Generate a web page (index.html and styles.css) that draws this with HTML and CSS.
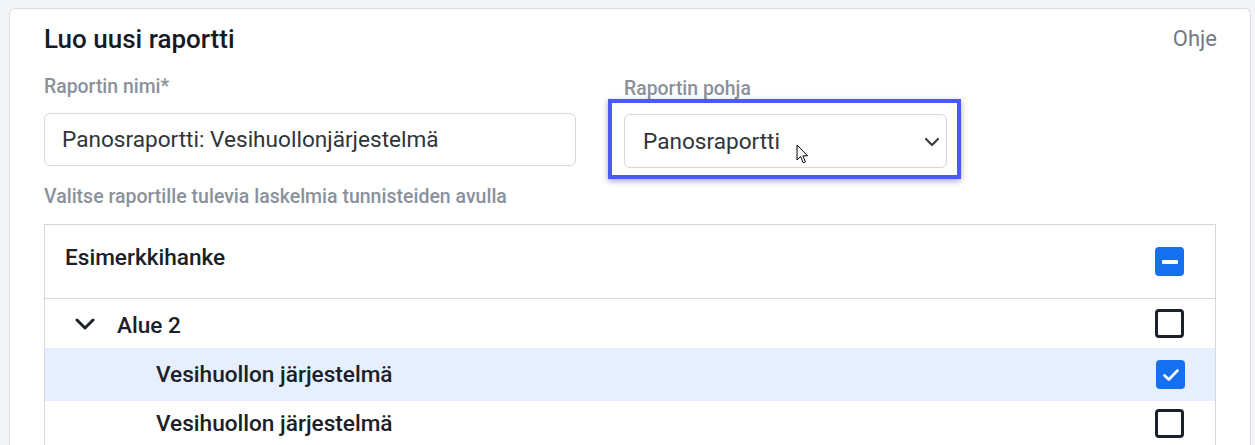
FILE: index.html
```html
<!DOCTYPE html>
<html lang="fi">
<head>
<meta charset="utf-8">
<title>Luo uusi raportti</title>
<link rel="stylesheet" href="styles.css">
</head>
<body>
<div class="card">
  <div class="card-head">
    <h1 class="title">Luo uusi raportti</h1>
    <a class="help">Ohje</a>
  </div>
  <div class="fields">
    <div class="field field-name">
      <div class="label">Raportin nimi*</div>
      <div class="input">Panosraportti: Vesihuollonjärjestelmä</div>
    </div>
    <div class="field field-template">
      <div class="label">Raportin pohja</div>
      <div class="select-wrap">
        <div class="select">
          <span>Panosraportti</span>
          <svg class="select-chevron" width="16" height="10" viewBox="0 0 16 10"><path d="M2 2 L8 8 L14 2" fill="none" stroke="#3a3d42" stroke-width="2.2" stroke-linecap="round" stroke-linejoin="round"/></svg>
        </div>
        <div class="highlight"></div>
        <svg class="pointer" width="14" height="21" viewBox="0 0 14 21"><path d="M1 1 L1 16 L4.6 12.6 L7.2 18.8 L9.4 17.9 L6.9 11.8 L11.6 11.8 Z" fill="#fff" stroke="#000" stroke-width="1" stroke-linejoin="round"/></svg>
      </div>
    </div>
  </div>
  <div class="hint">Valitse raportille tulevia laskelmia tunnisteiden avulla</div>
  <div class="tree">
    <div class="tree-head">
      <span class="tree-text">Esimerkkihanke</span>
      <span class="cb cb-partial"><span class="bar"></span></span>
    </div>
    <div class="row row-group">
      <span class="row-left">
        <svg class="caret" width="20" height="12" viewBox="0 0 20 12"><path d="M2 2 L10 10 L18 2" fill="none" stroke="#1c2029" stroke-width="3" stroke-linecap="round" stroke-linejoin="round"/></svg>
        <span class="tree-text">Alue 2</span>
      </span>
      <span class="cb"></span>
    </div>
    <div class="row row-child row-selected">
      <span class="tree-text">Vesihuollon järjestelmä</span>
      <span class="cb cb-checked"><svg width="18" height="14" viewBox="0 0 18 14"><path d="M2.5 7.5 L6.8 11.5 L15.5 2.5" fill="none" stroke="#fff" stroke-width="2.6" stroke-linecap="round" stroke-linejoin="round"/></svg></span>
    </div>
    <div class="row row-child">
      <span class="tree-text">Vesihuollon järjestelmä</span>
      <span class="cb"></span>
    </div>
  </div>
</div>
</body>
</html>
```

FILE: styles.css
```css
* { box-sizing: border-box; }

html, body {
  margin: 0;
  padding: 0;
  background: #f3f4f6;
  font-family: Roboto, "Liberation Sans", Arial, sans-serif;
  overflow: hidden;
}

.card {
  margin: 8px 4px 0 9px;
  background: #fff;
  border: 1px solid #d9dce1;
  border-bottom: none;
  border-radius: 6px 6px 0 0;
  padding: 14px 34px 0 34px;
  height: 460px;
}

.card-head {
  display: flex;
  justify-content: space-between;
  align-items: center;
  height: 32px;
}

.title {
  margin: 0;
  font-size: 26px;
  line-height: 32px;
  font-weight: 500;
  color: #161a22;
}

.help {
  font-size: 22px;
  color: #737a85;
  line-height: 32px;
  margin-right: -1px;
}

.fields {
  display: flex;
  gap: 48px;
  margin-top: 21px;
}

.field-name { width: 532px; }
.field-template { width: 323px; padding-top: 2px; }

.label {
  font-size: 19.4px;
  line-height: 22px;
  font-weight: 500;
  color: #8a919b;
}

.input {
  margin-top: 15px;
  height: 53px;
  border: 1px solid #d4d7dc;
  border-radius: 6px;
  padding: 0 17px;
  display: flex;
  align-items: center;
  font-size: 22.6px;
  color: #30343a;
}

.select-wrap {
  position: relative;
  margin-top: 14px;
}

.select {
  height: 54px;
  border: 1px solid #d4d7dc;
  border-radius: 6px;
  padding: 0 6px 0 18px;
  display: flex;
  align-items: center;
  justify-content: space-between;
  font-size: 22.6px;
  color: #30343a;
}

.select-chevron { margin-top: 1px; }

.highlight {
  position: absolute;
  left: -16px;
  top: -15px;
  width: 353px;
  height: 80px;
  border: 4px solid #4a5af2;
  box-shadow: 0 2px 6px rgba(0, 0, 0, 0.35);
  pointer-events: none;
}

.pointer {
  position: absolute;
  left: 172px;
  top: 30px;
}

.hint {
  margin-top: 18px;
  font-size: 19.5px;
  line-height: 22px;
  font-weight: 500;
  color: #8a919b;
}

.tree {
  margin-top: 16px;
  border: 1px solid #d4d7dc;
  border-bottom: none;
}

.tree-text {
  font-size: 22.6px;
  font-weight: 500;
  color: #1c2029;
}

.tree-head {
  height: 74px;
  border-bottom: 1px solid #d4d7dc;
  display: flex;
  align-items: center;
  justify-content: space-between;
  padding: 0 31px 0 20px;
}

.tree-head .tree-text { margin-bottom: 9px; }

.row {
  display: flex;
  align-items: center;
  justify-content: space-between;
  padding-right: 31px;
}

.row-group {
  height: 49px;
  padding-left: 30px;
}

.row-group .tree-text { margin-top: 3px; }

.row-left {
  display: flex;
  align-items: center;
  gap: 22px;
}

.caret { margin-top: 1px; }

.row-child {
  height: 44px;
  padding-left: 111px;
}

.row-selected {
  height: 53px;
  background: #e5effd;
}

.cb {
  width: 29px;
  height: 29px;
  border: 3px solid #1c2029;
  border-radius: 4px;
  display: flex;
  align-items: center;
  justify-content: center;
}

.cb-partial,
.cb-checked {
  background: #1570ef;
  border: none;
}

.cb-partial .bar {
  width: 16px;
  height: 4px;
  border-radius: 1px;
  background: #fff;
}

.row-selected .cb-checked { margin-right: -1px; }
```
